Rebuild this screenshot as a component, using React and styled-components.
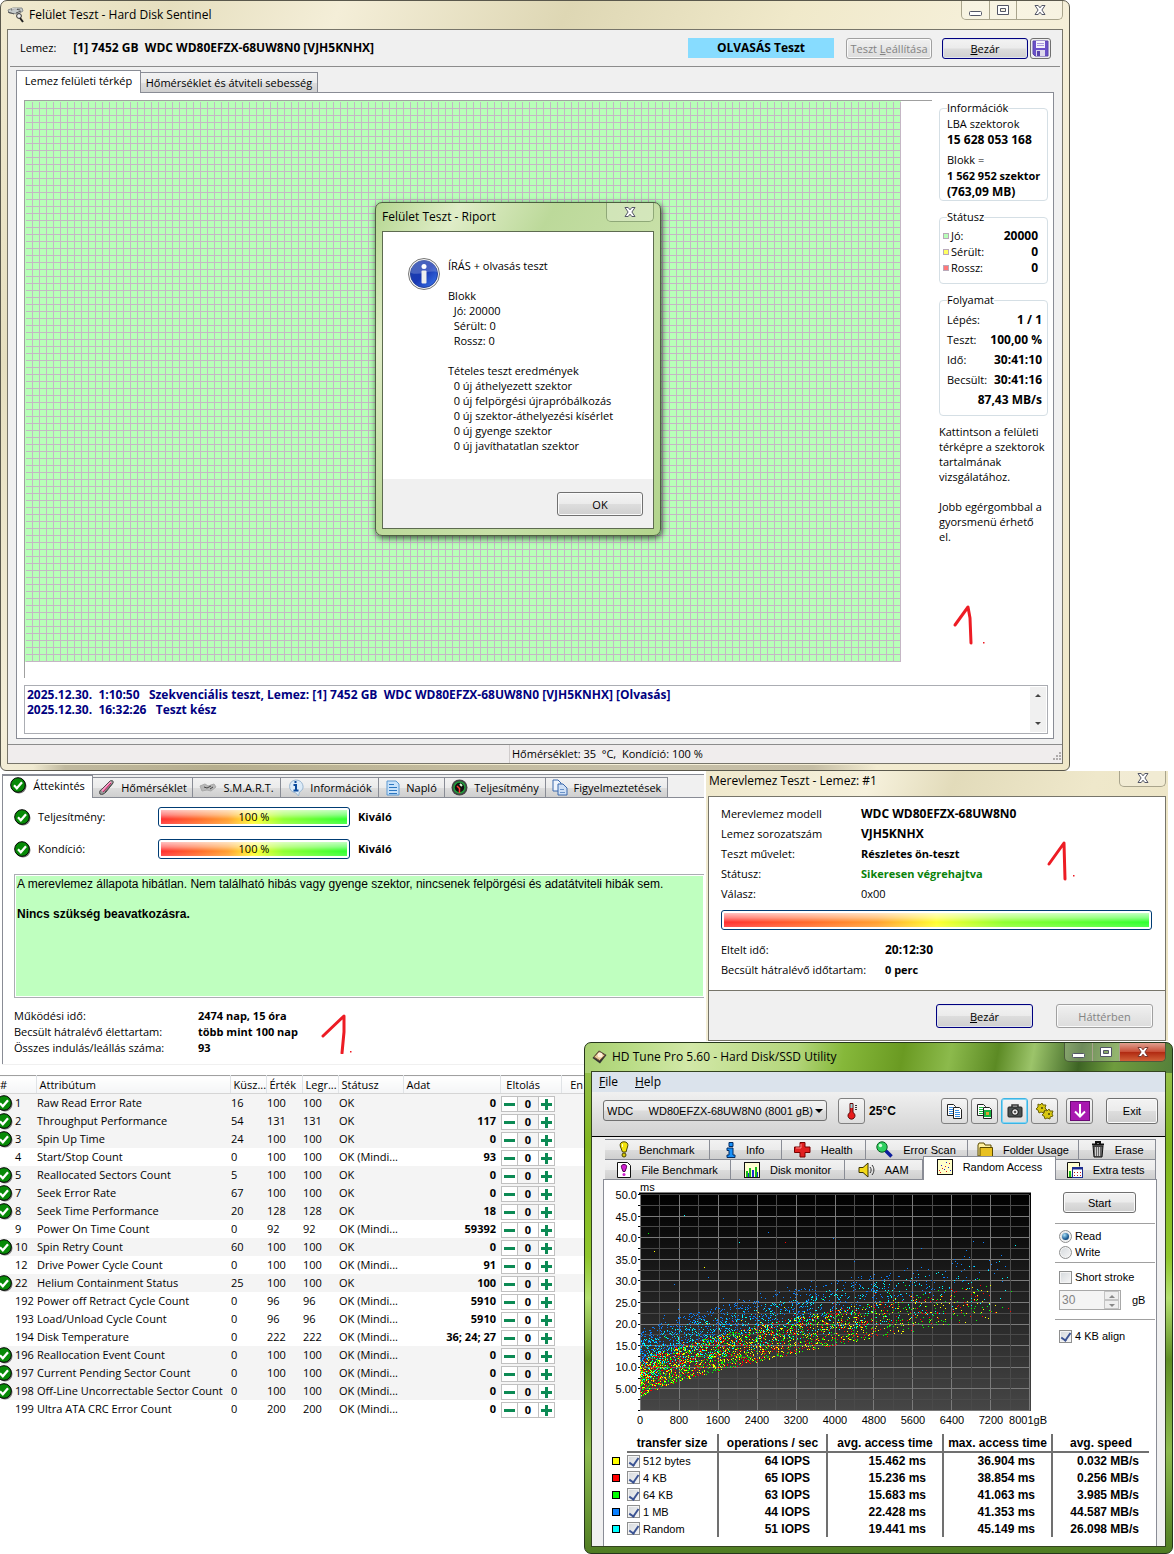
import React from 'react';
import styled, { createGlobalStyle } from 'styled-components';

const UI_FONT = '"Open Sans", "Noto Sans", sans-serif';
const ARIAL = '"Liberation Sans", Arial, sans-serif';

const GlobalStyle = createGlobalStyle`
    * {
        box-sizing: border-box;
    }

    body {
        margin: 0;
        background-color: #fff;
        color: #000;
        font-family: ${UI_FONT};
        font-size: 11px;
        line-height: 16px;
    }

    button, input, select {
        font-family: inherit;
        font-size: inherit;
        color: inherit;
    }
`;

const Desktop = styled.div`
    display: flex;
    flex-direction: column;
    overflow: hidden;
`;

const MiddleRow = styled.div`
    display: grid;
    grid-template-columns: minmax(0, 704fr) minmax(0, 462fr);
    column-gap: 2px;
    align-items: start;
    padding-right: 6px;
`;

const BottomRow = styled.div`
    display: grid;
    grid-template-columns: minmax(0, 584fr) minmax(0, 589fr);
    align-items: start;
    padding-right: 1px;
`;

/* ---------- shared parts ---------- */

const TitleBar = styled.div`
    display: flex;
    align-items: flex-start;
    height: 28px;
    padding-left: ${p => p.$indent || 0}px;
`;

const TitleText = styled.div`
    flex: 1;
    display: flex;
    align-items: center;
    gap: 5px;
    height: 27px;
    font-size: 12px;
    white-space: nowrap;
`;

const CaptionButtons = styled.div`
    display: flex;
    height: 19px;
    border: 1px solid ${p => p.$edge || '#a9a48c'};
    border-top: 0;
    border-radius: 0 0 5px 5px;
    overflow: hidden;
`;

const CaptionButton = styled.button`
    width: ${p => p.$wide ? 46 : 27}px;
    padding: 0;
    border: 0;
    border-left: ${p => p.$first ? '0' : '1px solid #a9a48c'};
    background: ${p => p.$red ? 'linear-gradient(#e0a090, #c85038 48%, #b02810 50%, #d06038)' : 'rgba(255, 255, 255, .25)'};
    display: flex;
    align-items: center;
    justify-content: center;
`;

const Button = styled.button`
    height: ${p => p.$height || 24}px;
    width: ${p => p.$width || 86}px;
    margin-left: ${p => p.$gap || 0}px;
    padding: 0;
    border: 1px solid #707070;
    border-radius: 3px;
    background: linear-gradient(#f3f3f3, #ebebeb 49%, #dddddd 51%, #cfcfcf);
    box-shadow: inset 0 0 0 1px #fafafa;
    display: flex;
    align-items: center;
    justify-content: center;
    white-space: nowrap;

    ${p => p.$primary && `
        border-color: #000080;
        box-shadow: inset 0 0 0 1px #dfe3ee;
    `}

    &:disabled {
        color: #838383;
        border-color: #a0a0a0;
        background: linear-gradient(#f0f0f0, #dcdcdc);
    }
`;

const Meter = styled.div`
    height: 20px;
    padding: 2px;
    border: 1px solid #003c74;
    border-radius: 3px;
    background-color: #fff;
`;

const MeterFill = styled.div`
    height: 14px;
    background:
        linear-gradient(rgba(255, 255, 255, .7), rgba(255, 255, 255, .4) 35%, rgba(255, 255, 255, 0) 65%, rgba(255, 255, 255, .15)),
        linear-gradient(90deg, #ff3030, #ff6a2a 20%, #ffa030 36%, #ffff30 50%, #8eff30 66%, #30ff30);
    line-height: 14px;
    text-align: center;
`;

const Mark = styled.svg`
    position: absolute;
    left: ${p => p.$left}px;
    top: ${p => p.$top}px;
    pointer-events: none;
`;

function RedOne({ left, top, path, dotX, dotY }) {
    return (
        <Mark $left={left} $top={top} width="35" height="42" viewBox="0 0 35 42">
            <path d={path} fill="none" stroke="#ed1c24" strokeWidth="3" strokeLinecap="round" strokeLinejoin="round" />
            <rect x={dotX} y={dotY} width="1.500" height="1.500" fill="#ed1c24" />
        </Mark>
    )
}

/* ---------- icons ---------- */

const CloseGlyph = ({ light }) => (
    <svg width="12" height="10" viewBox="0 0 12 10">
        <path d="M1 .5h3.200L6 2.800 7.800.5H11L7.900 5 11 9.500H7.800L6 7.200 4.200 9.500H1L4.100 5z" fill="#fff" stroke={light ? '#7a3a30' : '#535666'} />
    </svg>
);

const MinGlyph = () => (
    <svg width="13" height="12" viewBox="0 0 13 12"><rect x=".5" y="7.500" width="12" height="4" rx="1" fill="#fff" stroke="#535666" /></svg>
);

const MaxGlyph = () => (
    <svg width="12" height="10" viewBox="0 0 12 10">
        <path d="M.5.5h11v9H.5zM3.500 3.500h5v3h-5z" fill="#fff" fillRule="evenodd" stroke="#535666" />
    </svg>
);

const OkIcon = () => (
    <svg width="17" height="17" viewBox="0 0 17 17">
        <circle cx="9" cy="9" r="7.500" fill="#777" />
        <circle cx="8" cy="8" r="7.300" fill="#078a07" stroke="#000" />
        <path d="M4 8.300l2.800 2.900L12 5.200" fill="none" stroke="#fff" strokeWidth="2.300" />
    </svg>
);

const DiskIcon = () => (
    <svg width="17" height="16" viewBox="0 0 17 16">
        <path d="M1 3l5-2 9 0 1 3-5 3-9-1z" fill="#c4caca" stroke="#8a8e8e" />
        <path d="M1 5l6 2M4 3l4-1 5 1M9 6l5-2" fill="none" stroke="#555" />
        <path d="M5 2h5" stroke="#fff" />
        <circle cx="12" cy="9" r="2.400" fill="#eee" stroke="#333" />
        <path d="M13 11l3 4" stroke="#222" strokeWidth="2" />
    </svg>
);

const SaveIcon = () => (
    <svg width="17" height="17" viewBox="0 0 17 17">
        <path d="M1 1h15v15H3l-2-2z" fill="#6a50c8" stroke="#5a44ac" />
        <rect x="4" y="1" width="9" height="7" fill="#f4f2fb" />
        <path d="M5 3.500h7M5 5.500h7" stroke="#a898dc" />
        <rect x="4" y="10" width="9" height="6" fill="#ddd8ec" />
        <rect x="5" y="11" width="3" height="5" fill="#5a44ac" />
    </svg>
);

const InfoIcon = () => (
    <svg width="32" height="32" viewBox="0 0 32 32">
        <defs>
            <linearGradient id="infoBlue" x1="0" y1="0" x2="1" y2="1">
                <stop offset="0" stopColor="#1c3fa8" />
                <stop offset=".5" stopColor="#1838b4" />
                <stop offset="1" stopColor="#3f7df0" />
            </linearGradient>
        </defs>
        <circle cx="16" cy="16" r="15.500" fill="#f4f4f4" stroke="#777" />
        <circle cx="16" cy="16" r="13.500" fill="url(#infoBlue)" stroke="#24409c" />
        <path d="M3 15a13 13 0 0126-1c-9-2-17 4-26 1z" fill="#fff" opacity=".2" />
        <circle cx="16" cy="8.500" r="2.500" fill="#fff" />
        <rect x="13.500" y="12.500" width="5" height="13" rx="1" fill="#eee" />
    </svg>
);

const TempIcon = () => (
    <svg width="17" height="17" viewBox="0 0 17 17">
        <path d="M2 15c-1-2 0-4 2-5l8-8c2-1 4 0 3 2l-7 9c-2 2-4 3-6 2z" fill="#999" stroke="#444" />
        <path d="M4 12l9-9" stroke="#ff9ac8" strokeWidth="2" />
        <path d="M5 13l8-9" stroke="#c2185b" />
        <path d="M7 13l8-9" stroke="#555" />
    </svg>
);

const SmartIcon = () => (
    <svg width="18" height="12" viewBox="0 0 18 12">
        <path d="M1 4l5-2 3 2 6-2 2 3-5 4-4-1-5 1z" fill="#b8b8b8" stroke="#aaa" />
        <path d="M5 5l3 1 4-2M11 7l3-2" stroke="#444" fill="none" />
    </svg>
);

const BalloonIcon = () => (
    <svg width="17" height="18" viewBox="0 0 17 18">
        <path d="M8.500 1a7.500 6.500 0 014 12l-1 4-3-3.300A7.500 6.500 0 018.500 1z" fill="#dcebf8" stroke="#9ab6d0" />
        <path d="M6.500 6h2.500v5M6.500 11.500h5" stroke="#0b4a9c" strokeWidth="2" fill="none" />
        <rect x="7.500" y="2" width="2" height="2" fill="#0b4a9c" />
    </svg>
);

const LogIcon = () => (
    <svg width="14" height="16" viewBox="0 0 14 16">
        <path d="M1 1h9l3 3v11H1z" fill="#c8e2fa" stroke="#5c98d0" />
        <path d="M3 4.500h5M3 7.500h8M3 10.500h8M3 13.500h8" stroke="#2c76c0" />
    </svg>
);

const GaugeIcon = () => (
    <svg width="17" height="17" viewBox="0 0 17 17">
        <circle cx="8.500" cy="8.500" r="8" fill="#444" />
        <circle cx="8.500" cy="8.500" r="5.500" fill="#111" stroke="#1fa03c" strokeWidth="1.500" />
        <path d="M8.500 14V9M6 7l3 3" stroke="#ff3b30" strokeWidth="1.500" />
        <path d="M9 5l2 2" stroke="#d8ffd8" strokeWidth="2" />
    </svg>
);

const CopyIcon = ({ green }) => (
    <svg width="18" height="17" viewBox="0 0 18 17">
        <path d="M1.500 1.500h6l2 2v9h-8z" fill="#fff" stroke="#222" />
        <path d="M3 4.500h4M3 6.500h4M3 8.500h4M3 10.500h4" stroke={green ? '#18c040' : '#3a8ee0'} />
        <path d="M7.500 4.500h6l2 2v9h-8z" fill="#fff" stroke="#222" />
        {green
            ? <path d="M9 8h5v5H9z" fill="#e0a030" stroke="#18b040" strokeWidth="2" />
            : <path d="M9 7.500h4M9 9.500h5M9 11.500h5M9 13.500h5" stroke="#3a8ee0" />}
    </svg>
);

const DocsIcon = () => (
    <svg width="16" height="17" viewBox="0 0 16 17">
        <path d="M1 1h5l3 3v8H1z" fill="#eef4fc" stroke="#3a68ac" />
        <path d="M6 5h5l4 4v7H6z" fill="#cfe0f6" stroke="#3a68ac" />
        <path d="M8 10.500h4M8 13.500h5" stroke="#6b93c8" />
    </svg>
);

const HdTuneIcon = () => (
    <svg width="15" height="14" viewBox="0 0 15 14">
        <path d="M7 .5L14.500 5 8 13.500.5 8z" fill="#333" />
        <path d="M7 1.500l6 3.700-5.500 5.300L2 7z" fill="#e8c89a" stroke="#7b5a38" />
        <circle cx="8" cy="5" r="2.500" fill="#fff2dc" />
    </svg>
);

const ThermoIcon = () => (
    <svg width="12" height="18" viewBox="0 0 12 18">
        <path d="M4 1.500h3v9a3.500 3.500 0 11-3 0z" fill="#e81c1c" stroke="#5c0808" />
        <rect x="4.500" y="2" width="2" height="4" fill="#8fd6dc" />
        <path d="M9 3.500h2M9 5.500h2M9 7.500h2" stroke="#333" />
    </svg>
);

const CameraIcon = () => (
    <svg width="16" height="14" viewBox="0 0 16 14">
        <path d="M5 3V1h6v2" fill="none" stroke="#333" strokeWidth="1.500" />
        <rect x="1" y="3" width="14" height="10" rx="1" fill="#4a5050" stroke="#222" />
        <circle cx="8" cy="8" r="3.300" fill="#eee" stroke="#111" />
        <circle cx="8" cy="8" r="1.300" fill="#555" />
    </svg>
);

const GearsIcon = () => (
    <svg width="18" height="18" viewBox="0 0 18 18">
        <g fill="#d8c810" stroke="#6b6208">
            <path d="M2 2l2 1 2-2 1 2 3 0-1 3 2 2-3 1 0 2-3-1-2 1-1-3-2-1 2-2z" />
            <path d="M9 8l2 1 2-2 1 2 3 0-1 3 1 2-3 1 0 2-3-1-2 1-1-3-2-1 2-2z" />
        </g>
        <path d="M5 6l1-1 1 1-1 1zM12 12l1-1 1 1-1 1z" fill="#fff8b0" stroke="#6b6208" />
    </svg>
);

const ArrowIcon = () => (
    <svg width="20" height="20" viewBox="0 0 20 20">
        <rect x=".5" y=".5" width="19" height="19" fill="#a818b0" stroke="#6a0a74" />
        <path d="M10 3v12M5 10.500l5 5 5-5" fill="none" stroke="#fff" strokeWidth="2" />
    </svg>
);

const BulbIcon = () => (
    <svg width="10" height="17" viewBox="0 0 10 17">
        <path d="M5 .8c3 0 4.200 2 3.800 4L7 11H3.500L1.200 5C.8 2.500 2 .8 5 .8z" fill="#f2e30c" stroke="#4a4404" />
        <circle cx="5" cy="14" r="2" fill="#d8ca08" stroke="#4a4404" />
        <path d="M3.500 3v3" stroke="#fffbc0" />
    </svg>
);

const BlueInfoIcon = () => (
    <svg width="10" height="16" viewBox="0 0 10 16">
        <path d="M3 .5h4v4H3zM1 6h6v7h2v2.500H1V13h2V8.500H1z" fill="#1890f8" stroke="#032a60" />
    </svg>
);

const HealthIcon = () => (
    <svg width="17" height="16" viewBox="0 0 17 16">
        <path d="M6 .5h5V5h5v5.500h-5V15H6v-4.500H.5V5H6z" fill="#e02020" stroke="#700" />
        <path d="M7 2v4H2" stroke="#ff8a8a" fill="none" />
    </svg>
);

const ScanIcon = () => (
    <svg width="17" height="17" viewBox="0 0 17 17">
        <path d="M9 9l6.500 6.500" stroke="#0c1c9c" strokeWidth="3.500" />
        <circle cx="6" cy="6" r="5.200" fill="#2fd060" stroke="#0c6020" />
        <circle cx="4.500" cy="4.500" r="1.700" fill="#d0ffd8" />
    </svg>
);

const FolderIcon = () => (
    <svg width="16" height="16" viewBox="0 0 16 16">
        <path d="M1 3l1-2h5l1 2h6v11H1z" fill="#fff0a0" stroke="#5a4a00" />
        <path d="M3 5.500h12.500v9.500H3z" fill="#e8c020" stroke="#5a4a00" />
    </svg>
);

const TrashIcon = () => (
    <svg width="14" height="17" viewBox="0 0 14 17">
        <path d="M1 3.500h12M5 3V1h4v2" stroke="#111" strokeWidth="2" fill="none" />
        <path d="M2 5h10l-1 11H3z" fill="#666" stroke="#111" />
        <path d="M4.500 6v9M6.500 6v9M8.500 6v9" stroke="#ccc" />
    </svg>
);

const FileBenchIcon = () => (
    <svg width="14" height="16" viewBox="0 0 14 16">
        <path d="M.5.5h10l3 3v12H.5z" fill="#fff" stroke="#111" />
        <path d="M7 2.500c2 0 3 1 2.500 3L8 9.500H6L4.500 5.500c-.5-2 .5-3 2.500-3z" fill="#d020d0" stroke="#500050" />
        <circle cx="7" cy="12.500" r="1.500" fill="#d020d0" />
    </svg>
);

const MonitorIcon = () => (
    <svg width="16" height="16" viewBox="0 0 16 16">
        <rect x=".5" y=".5" width="15" height="15" fill="#ffffd0" stroke="#111" />
        <path d="M2 15V9h2v6zM5 15V6h2v9zM11 15V5h2v10z" fill="#18c018" />
        <path d="M4 15v-4h1v4zM8 15V8h2v7zM13 15v-5h1v5z" fill="#2030d0" />
    </svg>
);

const SpeakerIcon = () => (
    <svg width="17" height="16" viewBox="0 0 17 16">
        <path d="M1 5.500h4L10 1v14l-5-4.500H1z" fill="#f2d818" stroke="#3c3400" />
        <path d="M12 5c1.500 2 1.500 4 0 6M14 3c2.500 3 2.500 7 0 10" fill="none" stroke="#333" />
    </svg>
);

const ScatterIcon = () => (
    <svg width="16" height="16" viewBox="0 0 16 16">
        <rect x=".5" y=".5" width="15" height="15" fill="#ffffc8" stroke="#111" />
        <path d="M2 11h1v1H2zM5 9h1v1H5zM8 7h1v1H8zM12 4h1v1h-1zM3 13h1v1H3zM9 12h1v1H9z" fill="#e01818" />
        <path d="M4 6h1v1H4zM7 10h1v1H7zM11 8h1v1h-1zM13 11h1v1h-1zM9 3h1v1H9z" fill="#2020d0" />
    </svg>
);

const ExtraIcon = () => (
    <svg width="16" height="16" viewBox="0 0 16 16">
        <path d="M.5 15.500V.5h12v4" fill="#ffffd0" stroke="#111" />
        <path d="M0 15.500h6" stroke="#111" />
        <path d="M2 15V9h2v6z" fill="#18c018" />
        <rect x="5.500" y="5.500" width="10" height="10" fill="#fff" stroke="#1c2c90" />
        <path d="M5 6.500h11" stroke="#1c2c90" strokeWidth="2" />
        <path d="M7 10.500h7M7 13.500h7" stroke="#c02020" strokeDasharray="1 2" />
    </svg>
);

/* ---------- surface test window ---------- */

const SentinelWindow = styled.section`
    margin-right: 104px;
    padding: 0 6px 6px;
    border: 1px solid #5a584c;
    border-radius: 7px 7px 6px 6px;
    background:
        linear-gradient(90deg, transparent 3%, rgba(90, 80, 55, .3) 6%, rgba(90, 80, 55, .3) 76%, transparent 82%) bottom / 100% 5px no-repeat,
        linear-gradient(115deg, #f1ead0 0, #e6dfbf 12%, #f4eed8 24%, #ded7b4 40%, #f0e9ca 56%, #f6f0da 70%, #efe7c8 100%);
`;

const SentinelBody = styled.div`
    border: 1px solid #77756a;
    background-color: #f0f0f0;
`;

const Toolbar = styled.div`
    display: flex;
    align-items: center;
    height: 37px;
    margin: 0 2px 3px;
    padding: 0 9px 0 10px;
    border-bottom: 1px solid #8c8c8c;
`;

const ToolbarDisk = styled.strong`
    flex: 1;
    margin-left: 17px;
    font-size: 12px;
    white-space: pre;
`;

const TestMode = styled.div`
    width: 146px;
    height: 20px;
    margin-right: 12px;
    background-color: #87dcff;
    font-size: 12px;
    font-weight: bold;
    line-height: 20px;
    text-align: center;
`;

const IconButton = styled.button`
    width: 21px;
    height: 21px;
    margin-left: 2px;
    padding: 0;
    border: 1px solid #707070;
    border-radius: 3px;
    background-color: #eee;
    display: flex;
    align-items: center;
    justify-content: center;
`;

const TabStrip = styled.div`
    display: flex;
    align-items: flex-end;
    padding-left: ${p => p.$indent || 0}px;
`;

const Tab = styled.button`
    display: flex;
    align-items: center;
    justify-content: center;
    gap: 6px;
    height: ${p => p.$active ? 23 : 20}px;
    margin-bottom: ${p => p.$active ? -1 : 0}px;
    padding: 0 4px;
    padding-bottom: ${p => p.$active ? 3 : 0}px;
    flex: 0 0 ${p => p.$width}px;
    border: 1px solid #898c95;
    border-left-width: ${p => p.$active ? 1 : 0}px;
    border-bottom: 0;
    background: ${p => p.$active ? '#fff' : 'linear-gradient(#f2f2f2, #ebebeb 50%, #dddddd 51%, #cfcfcf)'};
    position: relative;
    white-space: nowrap;
`;

const TabPane = styled.div`
    display: flex;
    flex-direction: column;
    margin: 0 8px 5px;
    padding: 7px 5px 4px 7px;
    border: 1px solid #898c95;
    background-color: #fff;
`;

const MapRow = styled.div`
    display: flex;
    gap: 7px;
`;

const MapArea = styled.div`
    flex: 1;
    position: relative;
    height: 578px;
    border-left: 1px solid #a0a0a0;
    border-top: 1px solid #a0a0a0;
`;

const BlockGrid = styled.div`
    height: 561px;
    margin-right: 31px;
    border-left: 1px solid #b8ffb8;
    border-top: 1px solid #b8ffb8;
    background:
        linear-gradient(90deg, transparent 6px, #c5b6c5 6px) 0 0 / 7px 7px,
        linear-gradient(transparent 6px, #c5b6c5 6px) 0 0 / 7px 7px,
        #b8ffb8;
`;

const SideInfo = styled.aside`
    flex: 0 0 109px;
    min-width: 0;
    position: relative;
    display: flex;
    flex-direction: column;
    gap: 8px;
`;

const Group = styled.fieldset`
    min-width: 0;
    margin: 0;
    padding: ${p => p.$pad};
    border: 1px solid #d5dfe5;
    border-radius: 4px;
    white-space: nowrap;

    legend {
        margin-left: ${p => p.$legend || 0}px;
        padding: 0;
    }
`;

const InfoText = styled.div`
    font-size: ${p => p.$large ? 12 : 11}px;
    font-weight: ${p => p.$bold ? 'bold' : 'normal'};
    margin-top: ${p => p.$gap ? 4 : 0}px;
`;

const Pair = styled.div`
    display: flex;
    align-items: center;
    justify-content: space-between;
    height: ${p => p.$height}px;

    span {
        display: flex;
        align-items: center;
        gap: 2px;
    }

    strong {
        margin-left: auto;
        font-size: 12px;
    }
`;

const Dot = styled.i`
    width: 6px;
    height: 6px;
    border: 1px solid #b9a9b9;
    background-color: ${p => p.$color};
`;

const Hint = styled.p`
    margin: 0;
    line-height: 15px;
`;

const LogBox = styled.div`
    display: flex;
    justify-content: space-between;
    height: 49px;
    margin-top: 7px;
    padding: 1px 1px 1px 2px;
    border: 1px solid #abadb3;
    color: #000080;
    font-size: 12px;
    font-weight: bold;
    line-height: 15px;
    white-space: pre;
`;

const ScrollBar = styled.div`
    display: flex;
    flex-direction: column;
    justify-content: space-between;
    width: 16px;
    background-color: #f0f0f0;

    button {
        height: 17px;
        padding: 0;
        border: 0;
        background: none;
        font-size: 0;
    }
`;

const StatusBar = styled.div`
    display: flex;
    justify-content: flex-end;
    height: 19px;
    border-top: 1px solid #8c8c8c;
    background-color: #f0eded;

    div {
        flex: 0 1 553px;
        display: flex;
        justify-content: space-between;
        align-items: flex-end;
        padding-left: 2px;
        border-left: 1px solid #d0cccc;
        line-height: 18px;
        white-space: pre;
    }
`;

const ReportDialog = styled.div`
    position: absolute;
    left: 350px;
    top: 101px;
    width: 286px;
    padding: 0 6px 6px;
    border: 1px solid #4d5f40;
    border-radius: 7px;
    background: linear-gradient(120deg, #b4d690, #e0edc8 18%, #bcd99a 38%, #c8e0a8 65%, #b2d48c);
    box-shadow: 1px 2px 6px rgba(0, 0, 0, .7);
`;

const ReportBody = styled.div`
    display: flex;
    gap: 8px;
    height: 248px;
    padding: 26px 25px;
    border: 1px solid #5d6b50;
    border-bottom: 0;
    background-color: #fff;
    line-height: 15px;
    white-space: pre;
`;

const ReportFooter = styled.div`
    display: flex;
    justify-content: flex-end;
    height: 50px;
    padding: 13px 10px;
    border: 1px solid #5d6b50;
    border-top: 0;
    background-color: #f0f0f0;
`;

const reportText = `ÍRÁS + olvasás teszt

Blokk
  Jó: 20000
  Sérült: 0
  Rossz: 0

Tételes teszt eredmények
  0 új áthelyezett szektor
  0 új felpörgési újrapróbálkozás
  0 új szektor-áthelyezési kísérlet
  0 új gyenge szektor
  0 új javíthatatlan szektor`;

const blockStates = [
    { label: 'Jó:', value: '20000', color: '#b8ffb8' },
    { label: 'Sérült:', value: '0', color: '#ffff60' },
    { label: 'Rossz:', value: '0', color: '#ff7878' }
];

const progress = [
    ['Lépés:', '1 / 1'],
    ['Teszt:', '100,00 %'],
    ['Idő:', '30:41:10'],
    ['Becsült:', '30:41:16'],
    ['', '87,43 MB/s']
];

function SurfaceTest() {
    return (
        <SentinelWindow>
            <TitleBar>
                <TitleText><DiskIcon />Felület Teszt - Hard Disk Sentinel</TitleText>
                <CaptionButtons>
                    <CaptionButton $first aria-label="Kis méret"><MinGlyph /></CaptionButton>
                    <CaptionButton aria-label="Teljes méret"><MaxGlyph /></CaptionButton>
                    <CaptionButton $wide aria-label="Bezárás"><CloseGlyph /></CaptionButton>
                </CaptionButtons>
            </TitleBar>
            <SentinelBody>
                <Toolbar>
                    Lemez:
                    <ToolbarDisk>[1] 7452 GB  WDC WD80EFZX-68UW8N0 [VJH5KNHX]</ToolbarDisk>
                    <TestMode>OLVASÁS Teszt</TestMode>
                    <Button $height={21} disabled>Teszt&nbsp;<u>L</u>eállítása</Button>
                    <Button $height={21} $gap={10} $primary><u>B</u>ezár</Button>
                    <IconButton aria-label="Mentés"><SaveIcon /></IconButton>
                </Toolbar>
                <TabStrip $indent={8}>
                    <Tab $active $width={125}>Lemez felületi térkép</Tab>
                    <Tab $width={177}>Hőmérséklet és átviteli sebesség</Tab>
                </TabStrip>
                <TabPane>
                    <MapRow>
                        <MapArea>
                            <BlockGrid />
                            <ReportDialog role="dialog">
                                <TitleBar>
                                    <TitleText>Felület Teszt - Riport</TitleText>
                                    <CaptionButtons $edge="#8fa878">
                                        <CaptionButton $wide $first aria-label="Bezárás"><CloseGlyph /></CaptionButton>
                                    </CaptionButtons>
                                </TitleBar>
                                <ReportBody><InfoIcon />{reportText}</ReportBody>
                                <ReportFooter><Button>OK</Button></ReportFooter>
                            </ReportDialog>
                        </MapArea>
                        <SideInfo>
                            <Group $pad="0 0 0 7px">
                                <legend>Információk</legend>
                                <InfoText>LBA szektorok</InfoText>
                                <InfoText $bold $large>15 628 053 168</InfoText>
                                <InfoText $gap>Blokk =</InfoText>
                                <InfoText $bold>1 562 952 szektor</InfoText>
                                <InfoText $bold $large>(763,09 MB)</InfoText>
                            </Group>
                            <Group $pad="3px 9px 7px 3px" $legend={4}>
                                <legend>Státusz</legend>
                                {blockStates.map(s => (
                                    <Pair key={s.label} $height={16}>
                                        <span><Dot $color={s.color} />{s.label}</span>
                                        <strong>{s.value}</strong>
                                    </Pair>
                                ))}
                            </Group>
                            <Group $pad="2px 5px 5px 7px">
                                <legend>Folyamat</legend>
                                {progress.map(([label, value]) => (
                                    <Pair key={value} $height={20}>
                                        <span>{label}</span>
                                        <strong>{value}</strong>
                                    </Pair>
                                ))}
                            </Group>
                            <Hint>
                                Kattintson a felületi térképre a szektorok tartalmának vizsgálatához.
                                <br /><br />
                                Jobb egérgombbal a gyorsmenü érhető el.
                            </Hint>
                            <RedOne left={12} top={503} path="M4 22L17 4L19 15L20 40" dotX={32} dotY={39} />
                        </SideInfo>
                    </MapRow>
                    <LogBox>
                        <div>
                            2025.12.30.  1:10:50   Szekvenciális teszt, Lemez: [1] 7452 GB  WDC WD80EFZX-68UW8N0 [VJH5KNHX] [Olvasás]{'\n'}
                            2025.12.30.  16:32:26   Teszt kész
                        </div>
                        <ScrollBar>
                            <button aria-label="Fel"><svg width="6" height="3"><path d="M0 3l3-3 3 3z" fill="#444" /></svg></button>
                            <button aria-label="Le"><svg width="6" height="3"><path d="M0 0l3 3 3-3z" fill="#444" /></svg></button>
                        </ScrollBar>
                    </LogBox>
                </TabPane>
                <StatusBar>
                    <div>
                        Hőmérséklet: 35  °C,  Kondíció: 100 %
                        <svg width="12" height="12" viewBox="0 0 12 12">
                            <path d="M9 2h2M6 5h2M9 5h2M3 8h2M6 8h2M9 8h2" stroke="#b0acac" strokeWidth="2" />
                        </svg>
                    </div>
                </StatusBar>
            </SentinelBody>
        </SentinelWindow>
    )
}

/* ---------- overview panel ---------- */

const Overview = styled.section`
    position: relative;
    height: 291px;
    margin-left: 2px;
    margin-top: 3px;
    border-top: 1px solid #898c95;
    background-color: #f0f0f0;
`;

const OverviewPane = styled.div`
    height: 267px;
    padding: 9px 0 0 11px;
    border-top: 1px solid #898c95;
    border-left: 1px solid #898c95;
    background-color: #fff;
`;

const MeterRow = styled.div`
    display: grid;
    grid-template-columns: 24px 120px 192px 1fr;
    align-items: center;
    height: 20px;
    margin-bottom: 12px;

    strong {
        padding-left: 8px;
    }
`;

const HealthText = styled.div`
    height: 124px;
    margin-top: 15px;
    padding: 2px;
    border: 1px solid #abadb3;
    border-right: 0;
    background-color: #bfffbf;
    box-shadow: inset 0 0 0 1px #fff;
    font-family: ${ARIAL};
    font-size: 12px;
    line-height: 15px;
`;

const Facts = styled.dl`
    display: grid;
    grid-template-columns: 184px 1fr;
    margin: 10px 0 0;

    dd {
        margin: 0;
        font-weight: bold;
    }
`;

const overviewTabs = [
    { label: 'Hőmérséklet', icon: <TempIcon />, width: 100 },
    { label: 'S.M.A.R.T.', icon: <SmartIcon />, width: 88 },
    { label: 'Információk', icon: <BalloonIcon />, width: 98 },
    { label: 'Napló', icon: <LogIcon />, width: 66 },
    { label: 'Teljesítmény', icon: <GaugeIcon />, width: 101 },
    { label: 'Figyelmeztetések', icon: <DocsIcon />, width: 122 }
];

function OverviewPanel() {
    return (
        <Overview>
            <TabStrip>
                <Tab $active $width={91}><OkIcon />Áttekintés</Tab>
                {overviewTabs.map(t => <Tab key={t.label} $width={t.width}>{t.icon}{t.label}</Tab>)}
            </TabStrip>
            <OverviewPane>
                {['Teljesítmény:', 'Kondíció:'].map(label => (
                    <MeterRow key={label}>
                        <OkIcon />
                        {label}
                        <Meter><MeterFill>100 %</MeterFill></Meter>
                        <strong>Kiváló</strong>
                    </MeterRow>
                ))}
                <HealthText>
                    A merevlemez állapota hibátlan. Nem található hibás vagy gyenge szektor, nincsenek felpörgési és adatátviteli hibák sem.
                    <br /><br />
                    <b>Nincs szükség beavatkozásra.</b>
                </HealthText>
                <Facts>
                    <dt>Működési idő:</dt><dd>2474 nap, 15 óra</dd>
                    <dt>Becsült hátralévő élettartam:</dt><dd>több mint 100 nap</dd>
                    <dt>Összes indulás/leállás száma:</dt><dd>93</dd>
                </Facts>
            </OverviewPane>
            <RedOne left={316} top={237} path="M5 24L26 4L26 20L24 41" dotX={32} dotY={39} />
        </Overview>
    )
}

/* ---------- self test dialog ---------- */

const SelfTest = styled.section`
    position: relative;
    padding: 0 2px;
    background: linear-gradient(110deg, #efe8cc, #f6f1dc 30%, #e2dbba 45%, #efe8cb 70%, #ece4c4);
`;

const SelfTestTitle = styled.div`
    display: flex;
    justify-content: space-between;
    height: 25px;
    padding-left: 1px;
    font-size: 12px;
    line-height: 20px;
`;

const SelfTestClose = styled.button`
    width: 47px;
    height: 16px;
    padding: 0;
    border: 1px solid #a9a48c;
    border-top: 0;
    border-radius: 0 0 5px 5px;
    background-color: rgba(255, 255, 255, .2);
    line-height: 10px;
`;

const SelfTestBody = styled.div`
    padding: 7px 13px 10px 12px;
    border: 1px solid #77756a;
    background-color: #fff;
`;

const FactList = styled.dl`
    display: grid;
    grid-template-columns: ${p => p.$label}px 1fr;
    margin: ${p => p.$top || 0}px 0 0;
    margin-bottom: ${p => p.$bottom || 0}px;
    line-height: 20px;

    dd {
        margin: 0;
        font-weight: bold;
    }

    dd.disk {
        font-size: 12px;
    }

    dd.done {
        color: #0a820a;
    }

    dd.code {
        font-weight: normal;
    }
`;

const SelfTestFooter = styled.div`
    display: flex;
    justify-content: flex-end;
    gap: 23px;
    height: 50px;
    padding: 13px 12px;
    border: 1px solid #77756a;
    border-top: 0;
    background-color: #f0f0f0;
`;

function SelfTestDialog() {
    return (
        <SelfTest>
            <SelfTestTitle>
                Merevlemez Teszt - Lemez: #1
                <SelfTestClose aria-label="Bezárás"><CloseGlyph /></SelfTestClose>
            </SelfTestTitle>
            <SelfTestBody>
                <FactList $label={140} $bottom={6}>
                    <dt>Merevlemez modell</dt><dd className="disk">WDC WD80EFZX-68UW8N0</dd>
                    <dt>Lemez sorozatszám</dt><dd className="disk">VJH5KNHX</dd>
                    <dt>Teszt művelet:</dt><dd>Részletes ön-teszt</dd>
                    <dt>Státusz:</dt><dd className="done">Sikeresen végrehajtva</dd>
                    <dt>Válasz:</dt><dd className="code">0x00</dd>
                </FactList>
                <Meter><MeterFill /></Meter>
                <FactList $label={164} $top={10}>
                    <dt>Eltelt idő:</dt><dd className="disk">20:12:30</dd>
                    <dt>Becsült hátralévő időtartam:</dt><dd>0 perc</dd>
                </FactList>
            </SelfTestBody>
            <SelfTestFooter>
                <Button $primary $width={97}><u>B</u>ezár</Button>
                <Button disabled $width={97}>Háttérben</Button>
            </SelfTestFooter>
            <RedOne left={338} top={68} path="M5 25L20 4L21 40" dotX={29} dotY={36} />
        </SelfTest>
    )
}

/* ---------- S.M.A.R.T. table ---------- */

const AttributeTable = styled.table`
    width: 100%;
    margin-top: 10px;
    border-collapse: collapse;
    border-top: 1px solid #a0a0a0;
    table-layout: fixed;
    white-space: nowrap;

    th {
        height: 18px;
        padding: 0 0 0 3px;
        border-left: 1px solid #e0e3e6;
        border-bottom: 1px solid #d5d5d5;
        background: linear-gradient(#fff, #f4f5f6);
        font-weight: normal;
        line-height: 16px;
        text-align: left;
        overflow: hidden;
    }

    th:first-child {
        padding: 0;
        border-left: 0;
    }

    td {
        height: 18px;
        padding: 0 0 0 1px;
        line-height: 18px;
        overflow: hidden;
    }
`;

const AttributeRow = styled.tr`
    background-color: ${p => p.$ok ? '#f4f4f4' : '#fff'};

    td:last-child {
        border-right: 1px dashed #2b5a86;
    }
`;

const AttributeId = styled.div`
    display: flex;
    align-items: center;
    height: 18px;
    padding-left: ${p => p.$ok ? 0 : 14}px;

    svg {
        flex: none;
        margin-left: -5px;
        margin-right: 2px;
    }
`;

const AttributeData = styled.td`
    padding-right: 4px !important;
    font-weight: bold;
    text-align: right;
`;

const Offset = styled.div`
    display: flex;
    height: 16px;
    margin-top: 2px;

    button, output {
        width: 17px;
        height: 16px;
        padding: 0;
        border: 1px solid #c0c0c0;
        background-color: #fff;
        display: flex;
        align-items: center;
        justify-content: center;
        font-weight: bold;
        line-height: 14px;
    }

    output {
        width: 20px;
        border-width: 1px 0;
        background-color: transparent;
    }
`;

const attributes = [
    [1, 'Raw Read Error Rate', 16, 100, 100, 'OK', '0', true],
    [2, 'Throughput Performance', 54, 131, 131, 'OK', '117', true],
    [3, 'Spin Up Time', 24, 100, 100, 'OK', '0', true],
    [4, 'Start/Stop Count', 0, 100, 100, 'OK (Mindi...', '93', false],
    [5, 'Reallocated Sectors Count', 5, 100, 100, 'OK', '0', true],
    [7, 'Seek Error Rate', 67, 100, 100, 'OK', '0', true],
    [8, 'Seek Time Performance', 20, 128, 128, 'OK', '18', true],
    [9, 'Power On Time Count', 0, 92, 92, 'OK (Mindi...', '59392', false],
    [10, 'Spin Retry Count', 60, 100, 100, 'OK', '0', true],
    [12, 'Drive Power Cycle Count', 0, 100, 100, 'OK (Mindi...', '91', false],
    [22, 'Helium Containment Status', 25, 100, 100, 'OK', '100', true],
    [192, 'Power off Retract Cycle Count', 0, 96, 96, 'OK (Mindi...', '5910', false],
    [193, 'Load/Unload Cycle Count', 0, 96, 96, 'OK (Mindi...', '5910', false],
    [194, 'Disk Temperature', 0, 222, 222, 'OK (Mindi...', '36; 24; 27', false],
    [196, 'Reallocation Event Count', 0, 100, 100, 'OK (Mindi...', '0', true],
    [197, 'Current Pending Sector Count', 0, 100, 100, 'OK (Mindi...', '0', true],
    [198, 'Off-Line Uncorrectable Sector Count', 0, 100, 100, 'OK (Mindi...', '0', true],
    [199, 'Ultra ATA CRC Error Count', 0, 200, 200, 'OK (Mindi...', '0', false]
];

const columnWidths = [36, 194, 36, 36, 36, 65, 97, 61, 23];

function Attributes() {
    return (
        <AttributeTable>
            <colgroup>
                {columnWidths.map((w, idx) => <col key={idx} width={w} />)}
            </colgroup>
            <thead>
                <tr>
                    {['#', 'Attribútum', 'Küsz...', 'Érték', 'Legr...', 'Státusz', 'Adat', '\u00a0Eltolás', '\u00a0\u00a0En'].map(h => <th key={h}>{h}</th>)}
                </tr>
            </thead>
            <tbody>
                {attributes.map(([id, name, threshold, value, worst, status, data, ok]) => (
                    <AttributeRow key={id} $ok={ok}>
                        <td><AttributeId $ok={ok}>{ok && <OkIcon />}{id}</AttributeId></td>
                        <td>{name}</td>
                        <td>{threshold}</td>
                        <td>{value}</td>
                        <td>{worst}</td>
                        <td>{status}</td>
                        <AttributeData>{data}</AttributeData>
                        <td>
                            <Offset>
                                <button aria-label={`${name} -`}>
                                    <svg width="11" height="11"><path d="M0 5.500h11" stroke="#0c8a54" strokeWidth="3" /></svg>
                                </button>
                                <output>0</output>
                                <button aria-label={`${name} +`}>
                                    <svg width="11" height="11"><path d="M0 5.500h11M5.500 0v11" stroke="#0c8a54" strokeWidth="3" /></svg>
                                </button>
                            </Offset>
                        </td>
                        <td></td>
                    </AttributeRow>
                ))}
            </tbody>
        </AttributeTable>
    )
}

/* ---------- HD Tune window ---------- */

const TuneWindow = styled.section`
    position: relative;
    z-index: 1;
    margin-top: -23px;
    padding: 0 6px 6px;
    border: 1px solid #26361c;
    border-radius: 7px;
    background:
        linear-gradient(100deg, #a9cf72 0, #b9dc86 8%, #d2e8a8 18%, #b4d67c 36%, #86b83a 44%, #6a9a22 54%, #8cba4c 62%, #5c8a24 70%, #9cc46a 76%, #3d6424 84%, #6f9c3e 90%, #55803a 100%) top / 100% 30px no-repeat,
        linear-gradient(#9cc45a 0, #7fb41e 20%, #8fc62c 42%, #b4e070 50%, #5f8e24 62%, #8dbb4e 80%, #4f7c22 100%);
    font-family: ${ARIAL};
`;

const TuneTitle = styled(TitleText)`
    font-family: ${UI_FONT};
`;

const TuneBody = styled.div`
    border: 1px solid #33441f;
    background-color: #f0f0f0;
`;

const MenuBar = styled.nav`
    display: flex;
    gap: 17px;
    height: 20px;
    padding: 0 7px;
    background-color: #dbe3ec;
    font-family: ${UI_FONT};
    font-size: 12px;
    line-height: 19px;

    a {
        color: #000;
        text-decoration: none;
    }
`;

const TuneToolbar = styled.div`
    display: flex;
    align-items: flex-start;
    height: 45px;
    padding: 6px 7px 0 11px;
    border-bottom: 1px solid #000;
    background: linear-gradient(#f0f0f0, #d2d2d2);
`;

const DriveSelect = styled.div`
    display: grid;
    grid-template-columns: minmax(0, 1fr);
    flex: 0 1 224px;
    margin: 2px 11px 0 0;

    select, svg {
        grid-area: 1 / 1;
    }

    select {
        appearance: none;
        height: 21px;
        padding: 0 12px 0 3px;
        border: 1px solid #707070;
        border-radius: 3px;
        background: linear-gradient(#f3f3f3, #ebebeb 49%, #dddddd 51%, #cfcfcf);
        font-size: 11px;
    }

    svg {
        place-self: center end;
        margin-right: 4px;
        pointer-events: none;
    }
`;

const ToolButton = styled.button`
    flex: none;
    width: 27px;
    height: 26px;
    padding: 0;
    border: 1px solid ${p => p.$hot ? '#3cb4e4' : '#808080'};
    border-radius: 3px;
    background: linear-gradient(#f5f5f5, #ddd);
    box-shadow: ${p => p.$hot ? 'inset 0 0 0 1px #7fd4f4' : 'none'};
    display: flex;
    align-items: center;
    justify-content: center;
`;

const ToolGroup = styled.div`
    display: flex;
    gap: 3px;
    margin-left: auto;
    margin-right: 8px;
`;

const Temperature = styled.strong`
    margin-left: 4px;
    font-size: 12px;
    line-height: 26px;
`;

const TuneTabs = styled.div`
    display: flex;
    align-items: flex-end;
    height: ${p => p.$first ? 19 : 20}px;
    margin: ${p => p.$first ? '3px' : '0'} 9px 0 13px;
`;

const TuneTab = styled(Tab)`
    flex: ${p => p.$width} 0 0;
    height: ${p => p.$active ? 24 : 20}px;
    gap: 10px;
    font-family: ${ARIAL};
    z-index: ${p => p.$active ? 1 : 0};
`;

const TunePane = styled.div`
    margin: 0 8px 0 11px;
    padding: 1px 1px 9px 5px;
    border: 1px solid #898c95;
    border-bottom: 0;
    background-color: #fff;
`;

const ChartRow = styled.div`
    display: flex;
    justify-content: space-between;
`;

const Chart = styled.svg`
    display: block;
    flex: 0 1 440px;
    min-width: 0;

    text {
        font-family: ${ARIAL};
        font-size: 11px;
    }
`;

const Options = styled.div`
    flex: 0 0 100px;
    display: flex;
    flex-direction: column;
    padding-top: 11px;

    hr {
        width: 100%;
        margin: 0;
        border: 0;
        border-top: 1px solid #a0a0a0;
    }
`;

const OptionBlock = styled.div`
    display: flex;
    flex-direction: column;
    height: ${p => p.$height}px;
    padding: ${p => p.$pad || 0}px 0 0 4px;
`;

const OptionLabel = styled.label`
    display: flex;
    align-items: center;
    gap: 3px;
`;

const Check = styled.input`
    appearance: none;
    flex: none;
    width: 13px;
    height: 13px;
    margin: 0;
    border: 1px solid #8e8f8f;
    background: linear-gradient(135deg, #d4d8dc, #f6f6f6);
    box-shadow: inset 0 0 0 1px #f4f4f4;
    display: grid;
    place-items: center;

    &:checked::before {
        content: '';
        width: 4px;
        height: 8px;
        border: solid #3c5494;
        border-width: 0 2px 2px 0;
        transform: rotate(35deg);
    }
`;

const Radio = styled(Check)`
    border-radius: 50%;

    &:checked::before {
        width: 7px;
        height: 7px;
        border: 0;
        border-radius: 50%;
        background: radial-gradient(circle at 35% 30%, #a8e0f8, #1c5c94 60%, #0c3050);
        transform: none;
    }
`;

const StrokeSize = styled.div`
    display: flex;
    align-items: center;
    gap: 11px;
    margin-top: 5px;

    div {
        display: flex;
        width: 62px;
        height: 20px;
        border: 1px solid #a8a8a8;
        background-color: #f4f4f4;
    }

    input {
        width: 44px;
        padding: 0 2px;
        border: 0;
        background: none;
        color: #838383;
        font-size: 12px;
    }
`;

const Spinner = styled.span`
    display: flex;
    flex-direction: column;
    width: 15px;

    button {
        flex: 1;
        padding: 0;
        border: 1px solid #c4c4c4;
        background-color: #eee;
        line-height: 0;
    }
`;

const Results = styled.table`
    width: calc(100% - 9px);
    margin: 7px 7px 0 2px;
    border-collapse: collapse;
    table-layout: fixed;
    font-size: 12px;
    font-weight: bold;
    line-height: 14px;
    white-space: nowrap;

    th {
        height: 18px;
        padding: 0;
        border-bottom: 2px solid #707070;
    }

    th:first-child {
        border-bottom: 0;
    }

    td {
        height: 17px;
        padding: 0 16px 0 0;
        text-align: right;
    }

    td:last-child {
        padding-right: 10px;
    }

    th + th + th, td + td + td {
        border-left: 2px solid #707070;
    }
`;

const SizeCell = styled.td`
    padding: 0 !important;
    font-size: 11px;
    font-weight: normal;
    text-align: left !important;
`;

const Swatch = styled.i`
    display: block;
    width: 8px;
    height: 8px;
    margin-left: 1px;
    border: 1px solid #000;
    background-color: ${p => p.$color};
`;

const YELLOW = '#ffff00';
const RED = '#ff0000';
const GREEN = '#00ff00';
const BLUE = '#0a80ff';
const CYAN = '#00ffff';

const results = [
    [YELLOW, '512 bytes', '64 IOPS', '15.462 ms', '36.904 ms', '0.032 MB/s'],
    [RED, '4 KB', '65 IOPS', '15.236 ms', '38.854 ms', '0.256 MB/s'],
    [GREEN, '64 KB', '63 IOPS', '15.683 ms', '41.063 ms', '3.985 MB/s'],
    [BLUE, '1 MB', '44 IOPS', '22.428 ms', '41.353 ms', '44.587 MB/s'],
    [CYAN, 'Random', '51 IOPS', '19.441 ms', '45.149 ms', '26.098 MB/s']
];

// slow accesses well above the cloud: [gB, ms, colour]
const outliers = [
    [910, 45.1, CYAN], [170, 41, GREEN], [290, 36.900, YELLOW], [1320, 33, YELLOW],
    [2640, 41.3, BLUE], [2040, 39, CYAN], [2990, 38.9, RED], [3960, 39.7, BLUE],
    [7050, 39, BLUE], [7720, 38.3, CYAN], [5780, 37.5, BLUE], [6700, 37, BLUE],
    [4400, 34.400, BLUE], [690, 29.200, BLUE], [7180, 34.700, CYAN], [1390, 30.800, BLUE]
];

function makePoints() {
    let seed = 20251;
    const rand = () => {
        seed = (seed * 16807) % 2147483647;
        return seed / 2147483647;
    };
    const series = [YELLOW, RED, GREEN, BLUE, CYAN];
    const list = [...outliers];
    for (let i = 0; i < 8800; i++) {
        const color = series[i % 5];
        const t = Math.pow(rand(), 1.1) * .96;
        // the outer tracks are sampled more often than the inner ones
        if (rand() < Math.pow(t, .9)) continue;
        const floor = 2.800 + 20 * Math.pow(t, .72);
        let ms = floor + rand() * 8.300;
        if (color === BLUE) {
            ms = floor + 7 + rand() * 8;
        } else if (color === CYAN) {
            ms = floor + 3 + rand() * 10;
        }
        if (rand() > .96) {
            ms += rand() * 4;
        }
        list.push([t * 8001, ms, color]);
    }
    return list;
}

const points = makePoints();
const plotX = gb => 31 + Math.round(gb / 8001 * 389);
const plotY = ms => 229 - Math.round(ms / 50 * 216);

function AccessChart() {
    const lines = [];
    for (let i = 0; i <= 20; i++) {
        const major = i % 2 === 0;
        lines.push(<path key={'v' + i} d={`M${31.5 + Math.round(i * 19.450)} 14V230`} stroke={major ? '#7a7a7a' : '#4a4a4a'} />);
        lines.push(<path key={'h' + i} d={`M31 ${13.5 + Math.round(i * 10.800)}H420`} stroke={major ? '#7a7a7a' : '#4a4a4a'} />);
        lines.push(<path key={'t' + i} d={`M29 ${13.5 + Math.round(i * 10.800)}h2`} stroke="#000" />);
    }

    return (
        <Chart viewBox="0 0 440 246" width="440" height="246">
            <defs>
                <linearGradient id="plotShade" x1="0" y1="0" x2="0" y2="1">
                    <stop offset="0" stopColor="#000" />
                    <stop offset="1" stopColor="#464646" />
                </linearGradient>
            </defs>
            <rect x="31" y="12" width="391" height="218" fill="url(#plotShade)" />
            {lines}
            <path d="M30 12.500h392" stroke="#000" strokeWidth="2" />
            {points.map(([gb, ms, color], idx) => (
                <rect key={idx} x={plotX(gb)} y={plotY(ms)} width="1" height="1" fill={color} />
            ))}
            <text x="31" y="10">ms</text>
            {['50.0', '45.0', '40.0', '35.0', '30.0', '25.0', '20.0', '15.0', '10.0', '5.00'].map((label, idx) => (
                <text key={label} x="28" y={18 + Math.round(idx * 21.500)} textAnchor="end">{label}</text>
            ))}
            {[0, 800, 1600, 2400, 3200, 4000, 4800, 5600, 6400, 7200].map((label, idx) => (
                <text key={label} x={31 + idx * 39} y="243" textAnchor="middle">{label}</text>
            ))}
            <text x="438" y="243" textAnchor="end">8001gB</text>
        </Chart>
    )
}

const tabsTop = [
    ['Benchmark', <BulbIcon />, 106],
    ['Info', <BlueInfoIcon />, 70],
    ['Health', <HealthIcon />, 83],
    ['Error Scan', <ScanIcon />, 103],
    ['Folder Usage', <FolderIcon />, 114],
    ['Erase', <TrashIcon />, 75]
];

const tabsBottom = [
    ['File Benchmark', <FileBenchIcon />, 128],
    ['Disk monitor', <MonitorIcon />, 114],
    ['AAM', <SpeakerIcon />, 75],
    ['Random Access', <ScatterIcon />, 135, true],
    ['Extra tests', <ExtraIcon />, 99]
];

function HdTune() {
    return (
        <TuneWindow>
            <TitleBar $indent={1}>
                <TuneTitle><HdTuneIcon />HD Tune Pro 5.60 - Hard Disk/SSD Utility</TuneTitle>
                <CaptionButtons $edge="#4c5c3c">
                    <CaptionButton $first aria-label="Minimize"><MinGlyph /></CaptionButton>
                    <CaptionButton aria-label="Maximize"><MaxGlyph /></CaptionButton>
                    <CaptionButton $wide $red aria-label="Close"><CloseGlyph light /></CaptionButton>
                </CaptionButtons>
            </TitleBar>
            <TuneBody>
                <MenuBar>
                    <a href="#file"><u>F</u>ile</a>
                    <a href="#help"><u>H</u>elp</a>
                </MenuBar>
                <TuneToolbar>
                    <DriveSelect>
                        <select aria-label="Drive">
                            <option>WDC{'\u00a0\u00a0\u00a0\u00a0\u00a0'}WD80EFZX-68UW8N0 (8001 gB)</option>
                        </select>
                        <svg width="8" height="4"><path d="M0 0h8L4 4z" fill="#000" /></svg>
                    </DriveSelect>
                    <ToolButton aria-label="Temperature"><ThermoIcon /></ToolButton>
                    <Temperature>25°C</Temperature>
                    <ToolGroup>
                        <ToolButton aria-label="Copy text"><CopyIcon /></ToolButton>
                        <ToolButton aria-label="Copy image"><CopyIcon green /></ToolButton>
                        <ToolButton $hot aria-label="Screenshot"><CameraIcon /></ToolButton>
                        <ToolButton aria-label="Options"><GearsIcon /></ToolButton>
                    </ToolGroup>
                    <ToolButton aria-label="Minimize to tray"><ArrowIcon /></ToolButton>
                    <Button $width={52} $height={26} $gap={13}>Exit</Button>
                </TuneToolbar>
                <TuneTabs $first>
                    {tabsTop.map(([label, icon, width]) => <TuneTab key={label} $width={width}>{icon}{label}</TuneTab>)}
                </TuneTabs>
                <TuneTabs>
                    {tabsBottom.map(([label, icon, width, active]) => <TuneTab key={label} $width={width} $active={active}>{icon}{label}</TuneTab>)}
                </TuneTabs>
                <TunePane>
                    <ChartRow>
                        <AccessChart />
                        <Options>
                            <OptionBlock $height={31}>
                                <Button $width={73} $height={21} $gap={4}>Start</Button>
                            </OptionBlock>
                            <hr />
                            <OptionBlock $height={38} $pad={4}>
                                <OptionLabel><Radio type="radio" name="mode" defaultChecked />Read</OptionLabel>
                                <OptionLabel><Radio type="radio" name="mode" />Write</OptionLabel>
                            </OptionBlock>
                            <hr />
                            <OptionBlock $height={56} $pad={6}>
                                <OptionLabel><Check type="checkbox" />Short stroke</OptionLabel>
                                <StrokeSize>
                                    <div>
                                        <input aria-label="Stroke size" defaultValue="30" disabled />
                                        <Spinner>
                                            <button aria-label="More" disabled><svg width="6" height="3"><path d="M0 3l3-3 3 3z" fill="#888" /></svg></button>
                                            <button aria-label="Less" disabled><svg width="6" height="3"><path d="M0 0l3 3 3-3z" fill="#888" /></svg></button>
                                        </Spinner>
                                    </div>
                                    gB
                                </StrokeSize>
                            </OptionBlock>
                            <hr />
                            <OptionBlock $height={30} $pad={8}>
                                <OptionLabel><Check type="checkbox" defaultChecked />4 KB align</OptionLabel>
                            </OptionBlock>
                        </Options>
                    </ChartRow>
                    <Results>
                        <colgroup>
                            <col width="16" />
                            <col width="91" />
                            <col width="109" />
                            <col width="116" />
                            <col width="109" />
                            <col width="97" />
                        </colgroup>
                        <thead>
                            <tr>
                                <th></th>
                                <th>transfer size</th>
                                <th>operations / sec</th>
                                <th>avg. access time</th>
                                <th>max. access time</th>
                                <th>avg. speed</th>
                            </tr>
                        </thead>
                        <tbody>
                            {results.map(([color, size, ...values]) => (
                                <tr key={size}>
                                    <SizeCell><Swatch $color={color} /></SizeCell>
                                    <SizeCell><OptionLabel><Check type="checkbox" defaultChecked />{size}</OptionLabel></SizeCell>
                                    {values.map(v => <td key={v}>{v}</td>)}
                                </tr>
                            ))}
                        </tbody>
                    </Results>
                </TunePane>
            </TuneBody>
        </TuneWindow>
    )
}

function App() {
    return (
        <Desktop>
            <GlobalStyle />
            <SurfaceTest />
            <MiddleRow>
                <OverviewPanel />
                <SelfTestDialog />
            </MiddleRow>
            <BottomRow>
                <Attributes />
                <HdTune />
            </BottomRow>
        </Desktop>
    )
}

export default App;
